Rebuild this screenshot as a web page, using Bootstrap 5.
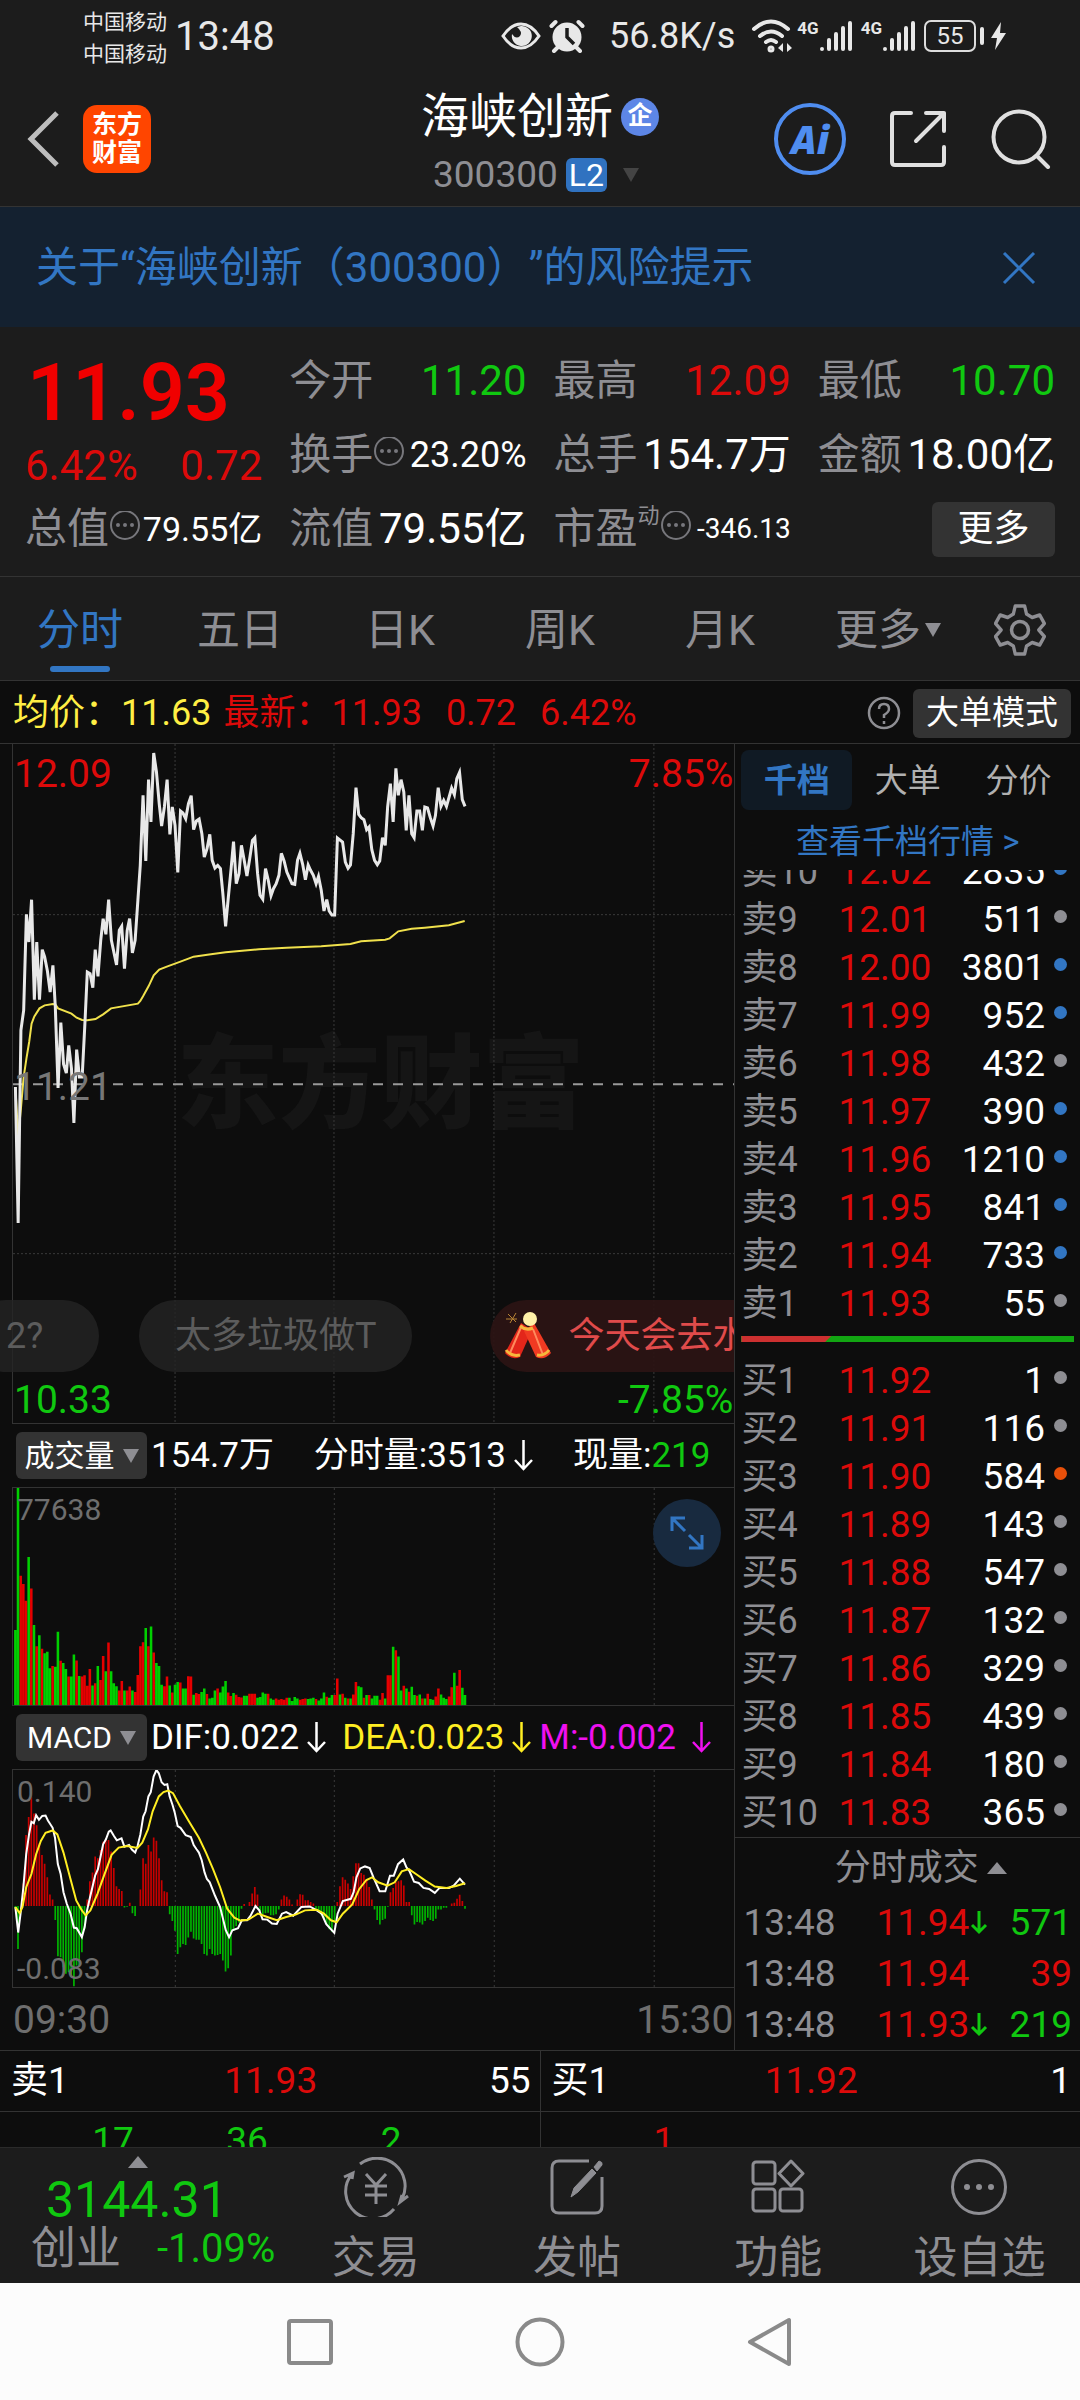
<!DOCTYPE html>
<html lang="zh-CN">
<head>
<meta charset="utf-8">
<meta name="viewport" content="width=device-width, initial-scale=1">
<title>海峡创新 300300</title>
<link href="https://cdn.jsdelivr.net/npm/bootstrap@5.3.0/dist/css/bootstrap.min.css" rel="stylesheet">
<style>
:root{--up:#dc0a0a;--down:#10c810;--dim:#8e8e93;--blue:#3276c3;--panel:#1c1c1c;--ink:#0d0d0d;--rule:#333}
body{background:var(--ink);color:#fff;font-family:Roboto,"Noto Sans CJK SC",sans-serif;font-size:36px;line-height:48px;overflow-x:hidden}
button{background:none;border:0;padding:0;color:inherit;font:inherit;white-space:nowrap}
a{color:inherit;text-decoration:none}
svg{display:block}
.up{color:var(--up)}.down{color:var(--down)}.dim{color:var(--dim)}.blue{color:var(--blue)}
.bar-dark{background:var(--panel)}
.num{font-size:37px}
.nowr{white-space:nowrap}
.tri{width:0;height:0;border:8px solid transparent;border-top:14px solid currentColor;border-bottom:0}
.tri-up{border-top:0;border-bottom:12px solid currentColor}
.tri-wide{border-left-width:10px;border-right-width:10px}
.chip{background:#333;border-radius:6px;color:#fff}
/* status */
.status{height:72px;padding:0 74px 0 83px;color:#e8e8e8}
.carrier{font-size:21px;line-height:32px;margin-top:4px}
.clock{font-size:40px;padding-top:2px}
.net4g{font-size:17px;line-height:16px;font-weight:700}
.batt{width:52px;height:32px;border:2px solid #ddd;border-radius:7px;font-size:24px;line-height:28px}
/* title */
.titlebar{height:135px;border-bottom:1px solid var(--rule);padding:0 29px 0 26px;position:relative}
.logo{width:68px;height:68px;background:#ff4500;border-radius:14px;font-size:25px;line-height:28px;font-weight:700;padding-top:6px}
.name-block{padding-top:15px}
.stock{font-size:48px;line-height:60px}
.corp{width:38px;height:38px;border-radius:50%;background:#5d86e6;font-size:25px;line-height:36px;font-weight:700}
.code-row{padding:4px 8px 0 0}
.l2{background:#3072c0;border-radius:6px;font-size:32px;line-height:34px;padding:0 3px}
.ai{width:72px;height:72px;border:4px solid #4f8df0;border-radius:50%;color:#4f8df0;font:italic 800 38px/62px "Open Sans",sans-serif}
/* notice */
.notice{height:120px;background:#142130;color:var(--blue);font-size:42px;padding:2px 44px 0 36px;text-spacing-trim:space-all}
/* quote */
.quote{height:250px;border-bottom:1px solid var(--rule);padding:17px 25px 0;display:grid;grid-template-columns:repeat(4,1fr);grid-template-rows:repeat(3,74px);column-gap:27px;font-size:42px}
.quote>div{display:flex;justify-content:space-between;align-items:center;white-space:nowrap}
.quote .price-block{grid-row:span 2;flex-direction:column;align-items:stretch;justify-content:flex-start}
.price{font-size:79px;line-height:98px;font-weight:600;color:#f00000;padding-left:2px}
.sm36{font-size:36px}.sm34{font-size:34px}.sm28{font-size:28px}.sm22{font-size:22px}
.more{width:123px;height:55px;font-size:36px}
/* period tabs */
.periods{height:104px;border-bottom:1px solid var(--rule);font-size:43px}
.periods button{height:103px;padding-top:2px;color:var(--dim);position:relative;flex:160 1 0}
.periods .on{color:var(--blue)}
.periods .on::after{content:"";position:absolute;left:50%;bottom:8px;width:60px;height:6px;margin-left:-30px;border-radius:3px;background:var(--blue)}
.periods .gear{flex:120 1 0}
.avgline{height:63px;border-bottom:1px solid var(--rule);padding:2px 9px 0 13px}
.mode{font-size:33px;padding:0 13px;height:49px}
/* charts */
.side{flex:0 0 32%;border-left:1px solid var(--rule)}
.plot{position:relative;margin-left:12px;border-left:1px solid var(--rule);border-bottom:1px solid var(--rule)}
.plot svg.draw{width:100%}
.price-plot svg.draw{height:679px}
.sub-plot{border-top:1px solid var(--rule)}
.sub-plot svg.draw{height:217px}
.lbl{position:absolute;font-size:39px;line-height:46px;left:1px}
.lbl-r{left:auto;right:1px}
.lbl-s{font-size:30px;line-height:36px;color:#6e6e6e;left:4px}
.t0{top:7px}.tm{top:320px}.tb{bottom:0}.ts{top:4px}.tz{bottom:0}
.water{position:absolute;left:0;right:0;top:276px;padding-right:150px;text-align:right;font-size:102px;line-height:130px;font-weight:900;color:#151515}
.danmu{position:absolute;left:-13px;right:0;top:556px;height:72px;overflow:hidden;color:#5c5c5c}
.danmu>span{height:72px;line-height:72px;border-radius:36px;background:rgba(36,36,36,.8);white-space:nowrap;padding:0 36px;flex:none}
.danmu .cut{margin-left:-30px;width:129px}
.danmu .mid{margin-left:40px}
.danmu .hot{background:rgba(43,20,20,.92);color:#e04b4b;padding-left:14px;margin-left:78px}
.ind{height:63px;font-size:35px;padding-left:16px;white-space:nowrap}
.ind button{width:131px;height:47px;font-size:30px;flex:none}
.ind svg{width:19px;height:32px}
.zoomer{position:absolute;right:13px;top:11px;width:68px;height:68px;border-radius:50%;background:#182a3f}
.times{height:61px;padding:2px 1px 0 13px;font-size:39px;color:#6e6e6e}
/* order book */
.modes{padding:6px 6px 0;height:65px;font-size:33px;color:#b0b0b0}
.modes button{flex:1 1 0;height:60px;border-radius:8px;padding-top:2px}
.modes .on{background:#101a24;color:var(--blue);font-weight:700}
.deep{font-size:33px;height:61px;line-height:65px}
.asks{height:458px}
.book{width:100%;table-layout:fixed}
.book th,.book td{height:48px;line-height:48px;padding:0;font-weight:400}
.book th{width:97px;color:var(--dim);font-size:36px}
.book .p{width:96px;color:var(--up)}
.book .q{text-align:right}
.book .d{width:22px}
.book i{display:block;width:13px;height:13px;border-radius:50%;background:#8e8e93;margin:0 0 8px auto}
.book .b i{background:#3276c3}.book .o i{background:#e8500a}
.bookwrap{padding:0 13px 0 6px}
.force{height:6px;margin:8px 6px 15px;background:#12a512}
.force div{height:6px;background:#cc3030;clip-path:polygon(0 0,100% 0,calc(100% - 6px) 100%,0 100%)}
.ticks-h{height:60px;border-top:1px solid var(--rule);font-size:36px;padding-left:26px}
.ticks{width:100%;table-layout:fixed}
.ticks td{height:51px;line-height:51px;padding:0}
.ticks .c1{width:110px}.ticks .c2{width:136px}
/* lower rows */
.best{border-top:1px solid var(--rule)}
.best>div+div{border-left:1px solid var(--rule)}
.best>div{flex:1 1 0;height:60px;padding:0 9px 0 11px;display:grid;grid-template-columns:1fr 1fr 1fr;align-items:center}
.queue{border-top:1px solid var(--rule);height:36px;overflow:hidden}
.queue>div{flex:1 1 0;display:grid;grid-template-columns:repeat(4,1fr);text-align:right;padding-right:4px;line-height:58px}
.queue>div+div{border-left:1px solid var(--rule)}
.tabbar{height:136px;border-top:1px solid #2a2a2a;background:var(--panel);color:var(--dim)}
.tabbar .idx{flex:275 1 0}
.tabbar a{flex:201 1 0;text-align:center;font-size:44px;line-height:56px;padding-top:9px}
.tabbar a svg{margin:0 auto 13px}
.index-v{font-size:50px;line-height:64px;padding-left:46px}
.index-n{font-size:45px;line-height:34px;padding-left:31px}
.index-c{font-size:40px}
.sysnav{height:118px;background:#fcfcfc;gap:174px}
</style>
<script src="https://cdn.jsdelivr.net/npm/bootstrap@5.3.0/dist/js/bootstrap.bundle.min.js"></script>
</head>
<body>
<header class="bar-dark">
  <div class="status d-flex align-items-center">
    <div class="carrier me-2">中国移动<br>中国移动</div>
    <div class="clock">13:48</div>
    <svg class="ms-auto" width="40" height="30" viewBox="0 0 40 30" fill="none" stroke="#e8e8e8" stroke-width="3"><path d="M2 15Q10 3 20 3T38 15Q30 27 20 27T2 15Z"/><path fill="#e8e8e8" stroke="none" d="M20 5a10 10 0 1 1-9 8q4 6 8 2 3-4-3-9Z"/></svg>
    <svg class="ms-2" width="36" height="34" viewBox="0 0 36 34"><circle cx="18" cy="18" r="14.500" fill="#e8e8e8"/><path d="M2.500 7l4-4M33.500 7l-4-4M5 32l5-5M31 32l-5-5" stroke="#e8e8e8" stroke-width="4" stroke-linecap="round"/><path d="M18 9v9l7 7" stroke="#1c1c1c" stroke-width="3.500" fill="none"/></svg>
    <span class="ms-4">56.8K/s</span>
    <svg class="ms-3" width="42" height="34" viewBox="0 0 42 34" fill="none" stroke="#e8e8e8" stroke-width="4" stroke-linecap="round"><path d="M3 10Q20-5 37 10M9 17q11-9 22 0M15 23q5-4 10 0"/><circle cx="20" cy="30" r="1.500"/><path d="M27 29l5-5v9zM41 29l-5-5v9z" fill="#e8e8e8" stroke="none"/></svg>
    <span class="net4g align-self-start mt-3 pt-1 ms-1">4G</span>
    <svg width="34" height="32" viewBox="0 0 34 32" stroke="#e8e8e8" stroke-width="4" stroke-linecap="round"><path d="M3 29v0M10 20v9M17 14v15M24 8v21M31 3v26"/></svg>
    <span class="net4g align-self-start mt-3 pt-1 ms-2">4G</span>
    <svg width="34" height="32" viewBox="0 0 34 32" stroke="#e8e8e8" stroke-width="4" stroke-linecap="round"><path d="M3 29v0M10 20v9M17 14v15M24 8v21M31 3v26"/></svg>
    <span class="batt text-center ms-2">55</span>
    <svg class="ms-1" width="26" height="32" viewBox="0 0 26 32" fill="#e8e8e8"><rect x="0" y="7" width="4" height="18" rx="2"/><path d="M21 2L11 18h6l-2 12 11-17h-6z"/></svg>
  </div>
  <div class="titlebar d-flex align-items-center">
    <button aria-label="返回"><svg width="34" height="58" viewBox="0 0 34 58" fill="none" stroke="#bdbdbd" stroke-width="5"><path d="M31 3L5 29l26 26"/></svg></button>
    <div class="logo text-center text-white" style="margin-left:23px">东方<br>财富</div>
    <div class="name-block position-absolute start-50 translate-middle-x top-0 text-center">
      <div class="d-flex align-items-center stock gap-2 nowr">海峡创新<span class="corp">企</span></div>
      <div class="code-row d-flex align-items-center justify-content-center gap-2 dim num"><span>300300</span><span class="l2 text-white">L2</span><span class="tri ms-2" style="color:#444"></span></div>
    </div>
    <div class="d-flex align-items-center ms-auto">
      <button class="ai" aria-label="Ai">Ai</button>
      <button aria-label="分享" style="margin:0 44px 0 43px"><svg width="58" height="58" viewBox="0 0 58 58" fill="none" stroke="#e0e0e0" stroke-width="4" stroke-linecap="round" stroke-linejoin="round"><path d="M22 3H6Q3 3 3 6v46q0 3 3 3h46q3 0 3-3V37M37 3h18v18M55 3L27 31"/></svg></button>
      <button aria-label="搜索"><svg width="60" height="60" viewBox="0 0 60 60" fill="none" stroke="#e0e0e0" stroke-width="4" stroke-linecap="round"><circle cx="28" cy="28" r="25.500"/><path d="M46 47l11 11"/></svg></button>
    </div>
  </div>
</header>

<div class="notice d-flex align-items-center justify-content-between">
  <a href="#" class="nowr">关于“海峡创新（300300）”的风险提示</a>
  <button aria-label="关闭"><svg width="34" height="34" viewBox="0 0 34 34" stroke="#3276c3" stroke-width="3"><path d="M2 2l30 30M32 2L2 32"/></svg></button>
</div>

<section class="bar-dark quote">
  <div class="price-block"><span class="price">11.93</span><span class="d-flex justify-content-between up"><span>6.42%</span><span>0.72</span></span></div>
  <div><span class="dim">今开</span><span class="down">11.20</span></div>
  <div><span class="dim">最高</span><span class="up">12.09</span></div>
  <div><span class="dim">最低</span><span class="down">10.70</span></div>
  <div><span class="dim d-flex align-items-center">换手<svg width="32" height="36" viewBox="0 2 32 36" fill="#77777c"><circle cx="16" cy="16" r="14" fill="none" stroke="#77777c" stroke-width="2"/><circle cx="9" cy="16" r="2"/><circle cx="16" cy="16" r="2"/><circle cx="23" cy="16" r="2"/></svg></span><span class="sm36">23.20%</span></div>
  <div><span class="dim">总手</span><span>154.7万</span></div>
  <div><span class="dim">金额</span><span>18.00亿</span></div>
  <div><span class="dim d-flex align-items-center">总值<svg width="32" height="36" viewBox="0 2 32 36" fill="#77777c"><circle cx="16" cy="16" r="14" fill="none" stroke="#77777c" stroke-width="2"/><circle cx="9" cy="16" r="2"/><circle cx="16" cy="16" r="2"/><circle cx="23" cy="16" r="2"/></svg></span><span class="sm34">79.55亿</span></div>
  <div><span class="dim">流值</span><span>79.55亿</span></div>
  <div><span class="dim d-flex align-items-center">市盈<span class="sm22 align-self-start lh-1">动</span><svg width="32" height="36" viewBox="0 2 32 36" fill="#77777c"><circle cx="16" cy="16" r="14" fill="none" stroke="#77777c" stroke-width="2"/><circle cx="9" cy="16" r="2"/><circle cx="16" cy="16" r="2"/><circle cx="23" cy="16" r="2"/></svg></span><span class="sm28">-346.13</span></div>
  <div><button class="chip more ms-auto">更多</button></div>
</section>

<nav class="bar-dark periods d-flex">
  <button class="on">分时</button><button>五日</button><button>日K</button><button>周K</button><button>月K</button>
  <button class="d-flex align-items-center justify-content-center"><span class="ms-3">更多</span><span class="tri ms-1"></span></button>
  <button class="gear" aria-label="设置"><svg class="mx-auto" width="52" height="54" viewBox="0 0 52 54" fill="none" stroke="#8e8e93" stroke-width="3.500" stroke-linejoin="round"><path d="M21 3h10l2 8 6 3.500 8-2.500 5 8.500-6 6.500 6 6.500-5 8.500-8-2.500-6 3.500-2 8H21l-2-8-6-3.500-8 2.500-5-8.500L6 27 0 20.500 5 12l8 2.500 6-3.500z" transform="translate(1.500 0) scale(.94 1)"/><circle cx="26" cy="27" r="8.500"/></svg></button>
</nav>

<div class="avgline d-flex align-items-center nowr">
  <span style="color:#ffee44">均价：11.63</span>
  <span class="up ms-2 ps-1">最新：11.93</span><span class="up ms-3 ps-2">0.72</span><span class="up ms-3 ps-2">6.42%</span>
  <svg class="ms-auto me-2" width="34" height="34" viewBox="0 0 34 34" fill="none" stroke="#8e8e93" stroke-width="2.500"><circle cx="17" cy="17" r="15"/><path d="M12 13q0-5 5-5t5 5q0 3-5 6v3M17 25v3"/></svg>
  <button class="chip mode ms-1">大单模式</button>
</div>

<main class="d-flex">
  <div class="flex-grow-1" style="min-width:0">
    <div class="plot price-plot">
      <div class="water">东方财富</div>
      <svg class="draw position-relative" viewBox="35 11 2097 2037" preserveAspectRatio="none" fill="none">
        <g stroke="#3a3a3a" stroke-width="1" stroke-dasharray="2 2"><path vector-effect="non-scaling-stroke" d="M506 11V2048M968 11V2048M1433 11V2048M1898 11V2048M35 523H2132M35 1540H2132"/></g>
        <path vector-effect="non-scaling-stroke" d="M35 1032H2132" stroke="#999" stroke-width="2" stroke-dasharray="10 10"/>
        <polyline vector-effect="non-scaling-stroke" stroke="#f0e14c" stroke-width="2" points="42,1040 50,1190 58,1105 66,1010 74,955 82,905 89,850 97,828 112,804 127,795 151,791 158,792 166,804 205,820 220,832 236,839 251,840 275,836 297,822 320,804 398,790 405,782 413,768 429,738 444,705 460,688 484,678 506,670 545,655 560,649 600,643 653,636 750,627 830,622 931,618 1016,611 1047,603 1117,598 1130,594 1155,573 1194,565 1232,562 1302,555 1348,542"/>
        <polyline vector-effect="non-scaling-stroke" stroke="#e8e8e8" stroke-width="3" points="42,1040 50,1448 58,870 66,810 74,522 81,605 89,478 97,778 104,605 112,778 120,628 127,650 135,692 143,755 151,675 158,800 166,1043 174,847 182,972 190,998 197,915 205,985 212,1148 220,928 228,1010 236,1010 244,850 251,695 259,700 267,742 274,628 282,708 290,600 297,535 305,582 313,478 321,600 336,674 344,570 351,558 359,685 367,570 374,535 382,638 390,600 398,480 405,374 413,165 421,362 429,118 436,245 444,38 452,95 460,190 467,257 475,200 483,118 491,282 498,200 506,255 514,396 522,212 529,218 537,235 545,190 553,166 560,268 568,242 576,236 584,280 591,350 599,325 607,282 614,360 622,383 630,375 638,385 645,460 653,558 661,470 669,385 676,304 684,430 692,400 699,315 707,360 715,407 723,355 731,300 738,292 746,400 753,465 761,477 769,385 777,420 785,466 792,445 800,430 808,405 815,339 823,362 831,395 846,430 854,432 862,360 869,339 877,372 885,418 893,374 900,390 908,405 916,430 923,408 931,450 939,512 947,478 954,512 962,524 970,524 978,293 993,305 1001,365 1009,384 1016,374 1024,280 1032,142 1040,222 1047,232 1055,238 1063,268 1070,260 1078,328 1086,360 1094,373 1101,362 1109,292 1117,315 1124,200 1132,130 1140,245 1148,84 1155,165 1163,118 1171,155 1178,270 1186,165 1194,280 1201,292 1209,212 1217,212 1225,270 1232,200 1240,203 1248,232 1256,257 1263,225 1271,142 1279,198 1287,180 1295,198 1310,143 1318,163 1325,115 1333,96 1341,178 1349,198"/>
      </svg>
      <span class="lbl t0 up">12.09</span><span class="lbl lbl-r t0 up">7.85%</span>
      <span class="lbl tm" style="color:#777">11.21</span>
      <div class="danmu d-flex">
        <span class="cut">2?</span>
        <span class="mid">太多垃圾做T</span>
        <span class="hot d-flex align-items-center"><svg class="me-3" width="48" height="50" viewBox="0 0 48 50"><path d="M17 12l11 7-12 27q-8 4-15-4z" fill="#e3261a"/><path d="M30 12l-10 8 12 26q8 4 15-4z" fill="#f03a22"/><path d="M18 14L6 42M29 18l10 26" stroke="#ff8a5c" stroke-width="2"/><path d="M2 39q5 7 14 5M33 44q8 1 12-5M16 15q6 5 13 2" stroke="#f6b73c" stroke-width="3" fill="none"/><circle cx="26" cy="8" r="7" fill="#fff1a8"/><path d="M4 3l8 8M12 2l-6 10M2 8h11" stroke="#b98535" stroke-width="1"/></svg>今天会去水</span>
      </div>
      <span class="lbl tb down">10.33</span><span class="lbl lbl-r tb down">-7.85%</span>
    </div>

    <div class="ind d-flex align-items-center">
      <button class="chip d-flex align-items-center justify-content-center gap-2">成交量<span class="tri dim"></span></button>
      <span class="ms-1">154.7万</span>
      <span class="d-flex align-items-center ms-auto">分时量:3513<svg class="ms-2" viewBox="0 0 19 32" fill="none" stroke="#fff" stroke-width="2.500"><path d="M9.500 0v29M1 20l8.500 9 8.500-9"/></svg></span>
      <span class="ms-auto me-4">现量:<span class="down">219</span></span>
    </div>
    <div class="plot sub-plot">
      <svg class="draw" viewBox="26 199 1529 657" preserveAspectRatio="none" fill="none">
        <path vector-effect="non-scaling-stroke" stroke="#3a3a3a" stroke-dasharray="2 3" d="M370 199V856M707 199V856M1046 199V856M1385 199V856"/>
        <path id="volR" fill="#e60000"/><path id="volG" fill="#00d000"/>
      </svg>
      <span class="lbl lbl-s ts">77638</span>
      <button class="zoomer" aria-label="放大"><svg class="m-auto" width="34" height="34" viewBox="0 0 34 34" fill="none" stroke="#3276c3" stroke-width="3"><path d="M2 15V2h13M2 2l13 13M19 19l13 13M19 32h13V19"/></svg></button>
    </div>

    <div class="ind d-flex align-items-center">
      <button class="chip d-flex align-items-center justify-content-center gap-2">MACD<span class="tri dim"></span></button>
      <span class="d-flex align-items-center ms-1">DIF:0.022<svg class="ms-2" viewBox="0 0 19 32" fill="none" stroke="#fff" stroke-width="2.500"><path d="M9.500 0v29M1 20l8.500 9 8.500-9"/></svg></span>
      <span class="d-flex align-items-center ms-3" style="color:#ffee22">DEA:0.023<svg class="ms-2" viewBox="0 0 19 32" fill="none" stroke="#ffee22" stroke-width="2.500"><path d="M9.500 0v29M1 20l8.500 9 8.500-9"/></svg></span>
      <span class="d-flex align-items-center ms-2" style="color:#f010f0">M:-0.002<svg class="ms-3" viewBox="0 0 19 32" fill="none" stroke="#f010f0" stroke-width="2.500"><path d="M9.500 0v29M1 20l8.500 9 8.500-9"/></svg></span>
    </div>
    <div class="plot sub-plot">
      <svg class="draw" viewBox="26 205 1529 657" preserveAspectRatio="none" fill="none">
        <path vector-effect="non-scaling-stroke" stroke="#3a3a3a" stroke-dasharray="2 3" d="M370 205V862M707 205V862M1046 205V862M1385 205V862"/>
        <path id="macR" fill="#c80000"/><path id="macG" fill="#00b400"/>
        <polyline vector-effect="non-scaling-stroke" stroke="#fff" stroke-width="2" points="31,620 37,697 42,640 48,560 54,460 60,400 65,362 70,366 75,342 81,356 88,344 95,343 100,358 110,380 115,410 121,490 127,520 133,575 140,610 148,640 155,682 161,684 172,711 178,680 183,630 189,592 200,525 206,505 217,430 223,415 229,392 233,388 240,405 246,418 256,412 262,437 272,432 278,446 285,455 290,435 296,400 302,346 307,330 313,285 318,272 324,225 330,205 335,215 341,242 347,250 353,248 358,285 364,310 369,335 375,375 381,380 392,402 403,408 409,432 415,445 420,455 426,478 432,515 437,535 443,545 454,585 465,620 471,655 477,690 484,711 491,690 503,684 511,660 522,660 530,645 540,617 548,630 555,657 565,658 575,670 585,671 596,640 605,635 620,646 637,620 655,618 670,630 680,640 690,672 707,698 714,640 725,602 742,595 748,575 754,530 762,503 772,497 782,502 790,530 803,572 815,572 825,525 833,525 842,490 853,476 860,500 866,510 876,543 886,547 896,562 908,565 920,577 930,562 950,562 960,555 973,534 984,552"/>
        <polyline vector-effect="non-scaling-stroke" stroke="#ffee22" stroke-width="2" points="31,620 40,638 46,620 54,560 65,520 75,460 85,420 95,395 110,388 120,400 133,455 145,520 160,600 172,630 180,645 190,630 205,580 220,520 235,462 250,440 268,435 290,441 300,425 312,385 322,330 335,285 345,272 355,267 365,275 380,315 400,363 420,410 435,455 450,505 465,560 480,625 495,652 508,661 525,658 545,640 565,650 585,660 605,650 625,643 645,630 670,628 685,640 700,660 712,666 725,640 745,612 760,565 775,538 787,530 800,545 820,555 835,545 850,512 865,505 880,520 900,540 920,558 945,562 965,556 984,548"/>
      </svg>
      <span class="lbl lbl-s ts">0.140</span><span class="lbl lbl-s tz">-0.083</span>
    </div>
    <div class="times d-flex justify-content-between align-items-center"><span>09:30</span><span>15:30</span></div>
  </div>

  <aside class="side">
    <div class="modes d-flex"><button class="on">千档</button><button>大单</button><button>分价</button></div>
    <a href="#" class="deep blue d-block text-center">查看千档行情 &gt;</a>
    <div class="bookwrap asks d-flex flex-column justify-content-end overflow-hidden">
      <table class="book num">
        <tr class="b"><th>卖10</th><td class="p">12.02</td><td class="q">2835</td><td class="d"><i></i></td></tr>
        <tr><th>卖9</th><td class="p">12.01</td><td class="q">511</td><td class="d"><i></i></td></tr>
        <tr class="b"><th>卖8</th><td class="p">12.00</td><td class="q">3801</td><td class="d"><i></i></td></tr>
        <tr class="b"><th>卖7</th><td class="p">11.99</td><td class="q">952</td><td class="d"><i></i></td></tr>
        <tr><th>卖6</th><td class="p">11.98</td><td class="q">432</td><td class="d"><i></i></td></tr>
        <tr class="b"><th>卖5</th><td class="p">11.97</td><td class="q">390</td><td class="d"><i></i></td></tr>
        <tr class="b"><th>卖4</th><td class="p">11.96</td><td class="q">1210</td><td class="d"><i></i></td></tr>
        <tr class="b"><th>卖3</th><td class="p">11.95</td><td class="q">841</td><td class="d"><i></i></td></tr>
        <tr class="b"><th>卖2</th><td class="p">11.94</td><td class="q">733</td><td class="d"><i></i></td></tr>
        <tr><th>卖1</th><td class="p">11.93</td><td class="q">55</td><td class="d"><i></i></td></tr>
      </table>
    </div>
    <div class="force"><div style="width:27%"></div></div>
    <div class="bookwrap">
      <table class="book num">
        <tr><th>买1</th><td class="p">11.92</td><td class="q">1</td><td class="d"><i></i></td></tr>
        <tr><th>买2</th><td class="p">11.91</td><td class="q">116</td><td class="d"><i></i></td></tr>
        <tr class="o"><th>买3</th><td class="p">11.90</td><td class="q">584</td><td class="d"><i></i></td></tr>
        <tr><th>买4</th><td class="p">11.89</td><td class="q">143</td><td class="d"><i></i></td></tr>
        <tr><th>买5</th><td class="p">11.88</td><td class="q">547</td><td class="d"><i></i></td></tr>
        <tr><th>买6</th><td class="p">11.87</td><td class="q">132</td><td class="d"><i></i></td></tr>
        <tr><th>买7</th><td class="p">11.86</td><td class="q">329</td><td class="d"><i></i></td></tr>
        <tr><th>买8</th><td class="p">11.85</td><td class="q">439</td><td class="d"><i></i></td></tr>
        <tr><th>买9</th><td class="p">11.84</td><td class="q">180</td><td class="d"><i></i></td></tr>
        <tr><th>买10</th><td class="p">11.83</td><td class="q">365</td><td class="d"><i></i></td></tr>
      </table>
    </div>
    <button class="ticks-h dim w-100 d-flex align-items-center justify-content-center">分时成交<span class="tri tri-up tri-wide ms-2"></span></button>
    <div class="ps-2 pe-2">
      <table class="ticks num">
        <tr><td class="dim c1">13:48</td><td class="c2"><span class="d-flex align-items-center justify-content-end up">11.94<svg width="20" height="24" viewBox="0 0 20 24" fill="none" stroke="#10c810" stroke-width="3"><path d="M10 0v21M3 14l7 7 7-7"/></svg></span></td><td class="down text-end">571</td></tr>
        <tr><td class="dim">13:48</td><td><span class="d-flex align-items-center justify-content-end up">11.94<svg width="20" height="24" viewBox="0 0 20 24"></svg></span></td><td class="up text-end">39</td></tr>
        <tr><td class="dim">13:48</td><td><span class="d-flex align-items-center justify-content-end up">11.93<svg width="20" height="24" viewBox="0 0 20 24" fill="none" stroke="#10c810" stroke-width="3"><path d="M10 0v21M3 14l7 7 7-7"/></svg></span></td><td class="down text-end">219</td></tr>
      </table>
    </div>
  </aside>
</main>

<section>
  <div class="best d-flex num">
    <div><span>卖1</span><span class="up text-center">11.93</span><span class="text-end">55</span></div>
    <div><span>买1</span><span class="up text-center">11.92</span><span class="text-end">1</span></div>
  </div>
  <div class="queue d-flex num">
    <div class="down"><span>17</span><span>36</span><span>2</span><span></span></div>
    <div class="up"><span>1</span><span></span><span></span><span></span></div>
  </div>
</section>

<nav class="tabbar d-flex">
  <div class="idx">
    <div class="d-flex justify-content-center pt-2"><span class="tri tri-up tri-wide"></span></div>
    <div class="index-v down">3144.31</div>
    <div class="index-n d-flex align-items-center justify-content-between nowr"><span>创业</span><span class="down index-c">-1.09%</span></div>
  </div>
  <a href="#"><svg width="66" height="60" viewBox="0 0 66 60" fill="none" stroke="#8e8e93" stroke-width="3"><path d="M17 7A28 28 0 0 1 59 42M51 52A27 27 0 0 1 9 17M1 20l9-4-1 6M65 39l-8 6 2-7M23 17l10 11 10-11M33 28v19M22 29h22M22 38h22"/></svg>交易</a>
  <a href="#"><svg width="58" height="60" viewBox="0 0 58 60" fill="none" stroke="#8e8e93" stroke-width="3"><path d="M41 4H11Q4 4 4 11v38q0 7 7 7h36q7 0 7-7V20"/><path d="M23 40l3-9 18-19 4 4-18 19zM46 10l5-6q4 1 3 4l-5 6z" fill="#8e8e93" stroke-width="1"/></svg>发帖</a>
  <a href="#"><svg width="54" height="60" viewBox="0 0 54 60" fill="none" stroke="#8e8e93" stroke-width="3"><rect x="2" y="5" width="22" height="22" rx="3"/><rect x="2" y="32" width="22" height="22" rx="3"/><rect x="29" y="32" width="22" height="22" rx="3"/><path d="M40 4l12 12.500L40 29 28 16.500z" stroke-linejoin="round"/></svg>功能</a>
  <a href="#"><svg width="60" height="60" viewBox="0 0 60 60" fill="#8e8e93"><circle cx="30" cy="30" r="26.500" fill="none" stroke="#8e8e93" stroke-width="3"/><circle cx="18" cy="30" r="3"/><circle cx="30" cy="30" r="3"/><circle cx="42" cy="30" r="3"/></svg>设自选</a>
</nav>
<div class="sysnav d-flex align-items-center justify-content-center">
  <button aria-label="最近任务"><svg width="56" height="52" viewBox="0 0 56 52" fill="none" stroke="#8a8a8a" stroke-width="4"><rect x="7" y="5" width="42" height="42" rx="2"/></svg></button>
  <button aria-label="主页"><svg width="56" height="52" viewBox="0 0 56 52" fill="none" stroke="#8a8a8a" stroke-width="4"><circle cx="28" cy="26" r="22.500"/></svg></button>
  <button aria-label="返回"><svg width="56" height="52" viewBox="0 0 56 52" fill="none" stroke="#8a8a8a" stroke-width="4" stroke-linejoin="round"><path d="M47 4v44L8 26z"/></svg></button>
</div>

<script>
// One value per minute; the sign of a volume picks its colour (plus = red, minus = green).
const volume=[-227,-657,391,366,316,-448,353,-242,178,-211,170,-157,-161,-111,118,-116,-222,134,-127,-109,86,-86,-153,135,-88,86,90,58,109,-59,66,-118,76,148,-102,189,-102,-66,-57,44,73,-44,44,56,-44,39,91,178,190,-233,178,-238,159,-127,-118,-61,57,86,-59,38,-61,-70,68,-50,-50,87,86,-31,36,33,-39,-50,33,-20,-22,-44,50,-38,-56,-73,38,27,-36,31,24,23,-28,-28,34,34,34,-22,-24,-38,-34,34,-20,-16,20,16,18,16,22,-22,-12,-24,-20,16,18,20,-18,-20,-22,18,-14,-20,-38,25,-22,-30,30,80,-32,34,-22,20,-20,32,70,-57,-54,22,-30,30,-20,-28,-28,16,36,-20,90,90,-176,166,-147,-44,58,-50,40,-55,-30,28,-32,20,-20,34,-18,-16,26,50,-32,-22,-18,26,54,-98,58,106,-52,-30];
const macd=[-8,-130,0,68,215,270,330,280,245,190,155,128,87,35,20,-42,-152,-155,-185,-205,-200,-210,-243,-180,-180,-140,-70,20,75,102,150,145,170,195,200,200,165,115,60,52,46,-4,-2,10,-22,-30,0,50,145,128,185,165,208,198,145,78,45,42,-25,-45,-75,-145,-125,-115,-118,-95,-78,-98,-102,-102,-115,-145,-150,-130,-145,-150,-148,-145,-165,-198,-188,-150,-75,-60,-50,-8,6,0,12,38,58,35,-15,-25,-22,-20,-28,-28,-25,-10,20,32,28,20,5,0,20,36,34,18,18,12,8,-8,-12,-28,-40,-55,-70,-78,-50,12,60,87,80,68,52,90,130,130,100,95,80,58,20,-10,-42,-56,-42,-38,-2,42,55,72,75,78,62,12,12,-28,-56,-48,-50,-56,-45,-35,-42,-45,-38,-10,-10,-5,-5,0,8,10,22,34,15,-8];
function bars(values,base,width,absolute){
  const out={up:'',down:''},step=953/(values.length-1);
  values.forEach((v,i)=>{
    const x=(31+i*step-width/2).toFixed(1),h=absolute?-Math.abs(v):-v;
    out[v>0?'up':'down']+=`M${x} ${base}v${h}h${width}v${-h}z`;
  });
  return out;
}
const vol=bars(volume,856,5.4,true),mac=bars(macd,617,3.6,false);
volR.setAttribute('d',vol.up);volG.setAttribute('d',vol.down);
macR.setAttribute('d',mac.up);macG.setAttribute('d',mac.down);
</script>
</body>
</html>
